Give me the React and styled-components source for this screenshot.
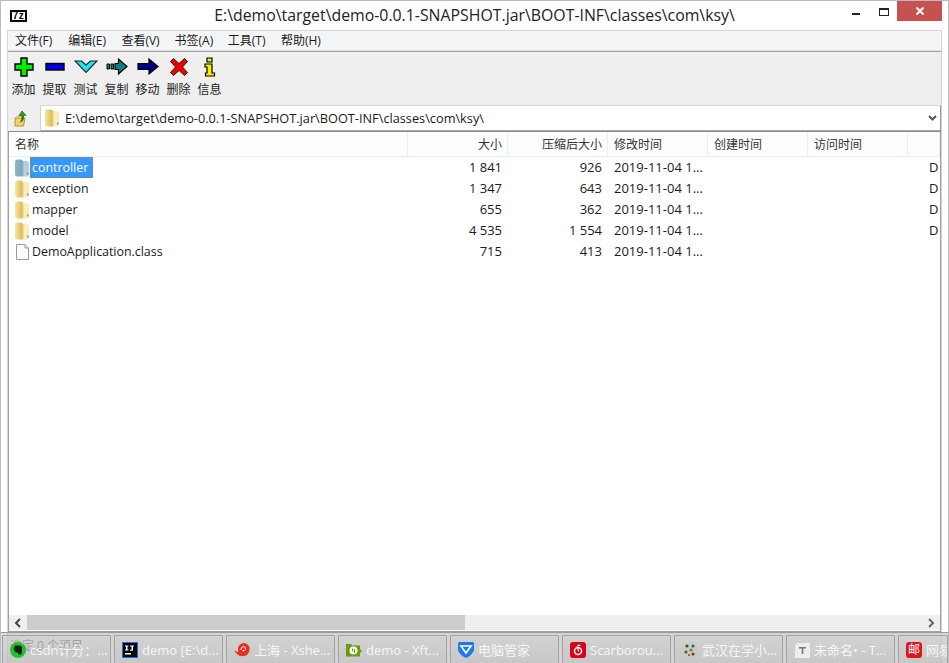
import React from 'react';
import styled, { createGlobalStyle } from 'styled-components';

const UI_FONT = '"Open Sans", "Noto Sans CJK SC", sans-serif';
const COLUMNS = '399px 100px 100px 100px 100px 100px 32px';

const GlobalStyle = createGlobalStyle`
    html, body { margin: 0; padding: 0; width: 949px; height: 663px; overflow: hidden; background: #fff; }
    * { box-sizing: border-box; }
    body { font-family: ${UI_FONT}; font-size: 13px; color: #1a1a1a; }
`;

const menus = ['文件(F)', '编辑(E)', '查看(V)', '书签(A)', '工具(T)', '帮助(H)'];

const files = [
    { name: 'controller', size: '1 841', packed: '926', kind: 'folder', selected: true, attr: 'D' },
    { name: 'exception', size: '1 347', packed: '643', kind: 'folder', attr: 'D' },
    { name: 'mapper', size: '655', packed: '362', kind: 'folder', attr: 'D' },
    { name: 'model', size: '4 535', packed: '1 554', kind: 'folder', attr: 'D' },
    { name: 'DemoApplication.class', size: '715', packed: '413', kind: 'file', attr: '' },
];

const PlusIcon = () => (
    <svg width="20" height="20" viewBox="0 0 20 20">
        <path d="M7 1h6v6h6v6h-6v6H7v-6H1V7h6z" fill="#00f000" stroke="#000" strokeWidth="1.4" />
    </svg>
);
const MinusIcon = () => (
    <svg width="20" height="20" viewBox="0 0 20 20">
        <rect x="1" y="6.5" width="18" height="6.5" fill="#0000e0" stroke="#000" strokeWidth="1.4" />
    </svg>
);
const CheckIcon = () => (
    <svg width="24" height="20" viewBox="0 0 24 20">
        <path d="M1 4h6.500l4.500 4 4.500-4H23L12 15.500z" fill="#19e6f0" stroke="#222" strokeWidth="1.200" />
    </svg>
);
const CopyIcon = () => (
    <svg width="22" height="20" viewBox="0 0 22 20">
        <path d="M1 7h2.500v5H1zM5 7h2.500v5H5z" fill="#0d8a8a" stroke="#000" strokeWidth="1" />
        <path d="M9 6.500h3.500V2l8.500 7.500-8.500 7.500v-4.500H9z" fill="#0d8080" stroke="#000" strokeWidth="1.200" />
    </svg>
);
const MoveIcon = () => (
    <svg width="22" height="20" viewBox="0 0 22 20">
        <path d="M1 6.500h11V2l9 7.500-9 7.500v-4.500H1z" fill="#000080" stroke="#000" strokeWidth="1.200" />
    </svg>
);
const DeleteIcon = () => (
    <svg width="20" height="20" viewBox="0 0 20 20">
        <path d="M4.500 1.500 10 6.500l5.500-5 3 3-5 5.500 5 5.500-3 3-5.500-5-5.500 5-3-3 5-5.500-5-5.500z" fill="#f00000" stroke="#222" strokeWidth="1" />
    </svg>
);
const InfoIcon = () => (
    <svg width="14" height="20" viewBox="0 0 14 20">
        <path d="M4 1h5v4H4zM2 7h7v9h2.500v3h-9v-3H4v-6H2z" fill="#f6f000" stroke="#000" strokeWidth="1.200" />
    </svg>
);

const tools = [
    { label: '添加', icon: <PlusIcon /> },
    { label: '提取', icon: <MinusIcon /> },
    { label: '测试', icon: <CheckIcon /> },
    { label: '复制', icon: <CopyIcon /> },
    { label: '移动', icon: <MoveIcon /> },
    { label: '删除', icon: <DeleteIcon /> },
    { label: '信息', icon: <InfoIcon /> },
];

const FolderIcon = ({ tint }) => {
    const id = tint ? 'folderBlue' : 'folderYellow';
    const stops = tint ? ['#8fb8ca', '#7da6ba', '#b4d0de'] : ['#f6e6a0', '#dcbc5c', '#f9eeb8'];
    return (
        <svg width="14" height="18" viewBox="0 0 14 18">
            <defs>
                <linearGradient id={id} x1="0" x2="1" y1="0" y2="0">
                    <stop offset="0" stopColor={stops[0]} />
                    <stop offset="0.5" stopColor={stops[1]} />
                    <stop offset="0.65" stopColor={stops[2]} />
                    <stop offset="1" stopColor={stops[2]} />
                </linearGradient>
            </defs>
            <path d="M0 3q0-2.500 2.500-2.500h3Q7.500.5 8 2h3.500Q14 2 14 4.500V15q0 2.500-2.500 2.500h-9Q0 17.500 0 15z" fill={`url(#${id})`} />
            <path d="M12 13.500h1.500v2H12z" fill="#3f9fe0" />
        </svg>
    );
};

const FileIcon = () => (
    <svg width="13" height="16" viewBox="0 0 13 16">
        <path d="M.5.500h8.500l3.500 3.500v11.500H.5z" fill="#fbfbfb" stroke="#9a9a9a" />
        <path d="M9 .500V4h3.500" fill="#e6e6e6" stroke="#9a9a9a" />
    </svg>
);

const UpIcon = () => (
    <svg width="16" height="17" viewBox="0 0 16 17">
        <path d="M1 8h10l-1.500 8H1z" fill="#f0d070" stroke="#b89030" />
        <path d="M2 6h6v2H2z" fill="#e8c060" />
        <path d="M8 1l4 4.500h-2.500V8q0 3-3 4 1.500-2 1.500-4V5.500H5z" fill="#2f9a2f" stroke="#176017" strokeWidth=".7" />
    </svg>
);

const EvernoteIcon = () => (
    <svg width="16" height="16" viewBox="0 0 16 16">
        <circle cx="8" cy="8" r="8" fill="#22c02f" />
        <path d="M5 3.500h5q2.500 .500 2 3.500L11.500 12.500H8.500L8 10.500H5.500L3.500 7z" fill="#142014" />
    </svg>
);
const IdeaIcon = () => (
    <svg width="16" height="16" viewBox="0 0 16 16">
        <rect x=".5" y=".5" width="15" height="15" fill="#000" stroke="#1670d8" />
        <rect x="3" y="11" width="6" height="1.500" fill="#fff" />
        <path d="M3 3.500h3.500v1h-1v3h1v1H3v-1h1v-3H3zM8 3.500h4v1h-1v3.500q0 .8-1 .8H8v-1h1.500V4.500H8z" fill="#fff" />
    </svg>
);
const XshellIcon = () => (
    <svg width="16" height="16" viewBox="0 0 16 16">
        <path d="M0 8.500q3 1.500 4.500 1-2-5 3-8 5-1.500 7.500 2.500 2 5-2 9-6 3-10-1z" fill="#e8301e" />
        <path d="M7 8q-.5-3 2.500-3.500 2.500.500 2 3-1 2-3 1" fill="none" stroke="#fff" strokeWidth="1" />
    </svg>
);
const XftpIcon = () => (
    <svg width="16" height="14" viewBox="0 0 16 14">
        <path d="M0 1h5l1 1.500h8V6l2 2-2 2v3.500H0z" fill="#6a9a10" />
        <circle cx="7.500" cy="7.500" r="4" fill="#fff" />
        <path d="M6.500 5.500v3M8.500 6v4" stroke="#6a9a10" strokeWidth="1" />
    </svg>
);
const ManagerIcon = () => (
    <svg width="16" height="16" viewBox="0 0 16 16">
        <path d="M1.500 0h13q1.500 0 1.500 1.500V8q-1.500 5-8 8-6.500-3-8-8V1.500Q0 0 1.500 0z" fill="#1a78f0" />
        <path d="M3 4h10L8 11z" fill="none" stroke="#fff" strokeWidth="1.700" />
    </svg>
);
const MusicIcon = () => (
    <svg width="16" height="16" viewBox="0 0 16 16">
        <rect width="16" height="16" rx="3" fill="#d9001b" />
        <circle cx="8" cy="9" r="3.500" fill="none" stroke="#fff" strokeWidth="1.500" />
        <path d="M10.500 3.500q-3-1-3 1l1 5" fill="none" stroke="#fff" strokeWidth="1.200" />
    </svg>
);
const AvatarIcon = () => (
    <svg width="16" height="16" viewBox="0 0 16 16">
        <circle cx="8" cy="8" r="8" fill="#cfcabb" />
        <circle cx="5" cy="4" r="1.500" fill="#444" />
        <circle cx="11" cy="4" r="1.500" fill="#2a5a9a" />
        <circle cx="4" cy="10" r="1.500" fill="#555" />
        <circle cx="9" cy="8" r="1.500" fill="#6a7a40" />
        <circle cx="11" cy="12" r="1.500" fill="#444" />
        <circle cx="7" cy="13" r="1" fill="#b03030" />
    </svg>
);
const TyporaIcon = () => (
    <svg width="16" height="16" viewBox="0 0 16 16">
        <path d="M3 1h13v15H1V3z" fill="#ececec" />
        <path d="M5 5h7v1.500H9.300V12H7.700V6.500H5z" fill="#777" />
    </svg>
);
const MailIcon = () => <MailBadge>邮</MailBadge>;

const tasks = [
    { label: 'csdn计分：...', icon: <EvernoteIcon /> },
    { label: 'demo [E:\\d...', icon: <IdeaIcon /> },
    { label: '上海 - Xshe...', icon: <XshellIcon /> },
    { label: 'demo - Xft...', icon: <XftpIcon /> },
    { label: '电脑管家', icon: <ManagerIcon /> },
    { label: 'Scarborou...', icon: <MusicIcon /> },
    { label: '武汉在学小...', icon: <AvatarIcon /> },
    { label: '未命名• - T...', icon: <TyporaIcon /> },
    { label: '网易', icon: <MailIcon />, clipped: true },
];

const App = () => {
    return (
        <>
            <GlobalStyle />
            <Window>
                <TitleBar>
                    <AppLogo>7z</AppLogo>
                    <Title>E:\demo\target\demo-0.0.1-SNAPSHOT.jar\BOOT-INF\classes\com\ksy\</Title>
                    <WindowButtons>
                        <MinimizeButton />
                        <MaximizeButton />
                        <CloseButton>
                            <svg width="10" height="10" viewBox="0 0 10 10">
                                <path d="M1.500 1.500l7 7M8.500 1.500l-7 7" stroke="#fff" strokeWidth="1.800" />
                            </svg>
                        </CloseButton>
                    </WindowButtons>
                </TitleBar>
                <Client>
                    <MenuBar>
                        {menus.map((m) => (
                            <MenuItem key={m}>{m}</MenuItem>
                        ))}
                    </MenuBar>
                    <Toolbar>
                        {tools.map((t) => (
                            <ToolButton key={t.label}>
                                <ToolIcon>{t.icon}</ToolIcon>
                                <span>{t.label}</span>
                            </ToolButton>
                        ))}
                    </Toolbar>
                    <AddressRow>
                        <UpButton>
                            <UpIcon />
                        </UpButton>
                        <AddressBox>
                            <FolderIcon />
                            <AddressText>E:\demo\target\demo-0.0.1-SNAPSHOT.jar\BOOT-INF\classes\com\ksy\</AddressText>
                            <svg width="9" height="7" viewBox="0 0 9 7">
                                <path d="M1 1l3.500 3.500L8 1" fill="none" stroke="#555" strokeWidth="2" />
                            </svg>
                        </AddressBox>
                    </AddressRow>
                    <ListPanel>
                        <HeaderRow>
                            <HeaderCell>名称</HeaderCell>
                            <HeaderCell $right>大小</HeaderCell>
                            <HeaderCell $right>压缩后大小</HeaderCell>
                            <HeaderCell>修改时间</HeaderCell>
                            <HeaderCell>创建时间</HeaderCell>
                            <HeaderCell>访问时间</HeaderCell>
                            <HeaderCell />
                        </HeaderRow>
                        <Rows>
                            {files.map((f) => (
                                <FileRow key={f.name}>
                                    <NameCell>
                                        <IconSlot>
                                            {f.kind === 'folder' ? <FolderIcon tint={f.selected} /> : <FileIcon />}
                                        </IconSlot>
                                        <FileName $selected={f.selected}>{f.name}</FileName>
                                    </NameCell>
                                    <Cell $right>{f.size}</Cell>
                                    <Cell $right>{f.packed}</Cell>
                                    <Cell>2019-11-04 1...</Cell>
                                    <Cell />
                                    <Cell />
                                    <AttrCell>{f.attr}</AttrCell>
                                </FileRow>
                            ))}
                        </Rows>
                        <HScroll>
                            <ScrollArrow>
                                <svg width="8" height="10" viewBox="0 0 8 10">
                                    <path d="M6 1L2 5l4 4" fill="none" stroke="#444" strokeWidth="2" />
                                </svg>
                            </ScrollArrow>
                            <ScrollThumb />
                            <ScrollArrow $end>
                                <svg width="8" height="10" viewBox="0 0 8 10">
                                    <path d="M2 1l4 4-4 4" fill="none" stroke="#666" strokeWidth="2" />
                                </svg>
                            </ScrollArrow>
                        </HScroll>
                    </ListPanel>
                    <StatusBar>选定 0 个项目</StatusBar>
                </Client>
                <Taskbar>
                    {tasks.map((t) => (
                        <TaskButton key={t.label} $clipped={t.clipped}>
                            <TaskIcon>{t.icon}</TaskIcon>
                            <TaskLabel>{t.label}</TaskLabel>
                        </TaskButton>
                    ))}
                </Taskbar>
            </Window>
        </>
    );
};

export default App;

const Window = styled.div`
    position: relative;
    display: flex;
    flex-direction: column;
    width: 949px;
    height: 663px;
    overflow: hidden;
    background: #fff;
    border: 1px solid #bcbcbc;
    border-bottom: none;
`;

const TitleBar = styled.div`
    display: flex;
    align-items: center;
    justify-content: center;
    position: relative;
    height: 29px;
    flex: none;
`;

const AppLogo = styled.div`
    position: absolute;
    left: 9px;
    top: 9px;
    width: 17px;
    height: 12px;
    border: 2px solid #000;
    background: #fff;
    color: #000;
    font: bold 10px/8px "Liberation Sans", sans-serif;
    text-align: center;
    letter-spacing: 0.5px;
`;

const Title = styled.div`
    font-size: 15.85px;
    color: #222;
    margin-bottom: 1px;
    white-space: nowrap;
`;

const WindowButtons = styled.div`
    position: absolute;
    right: 6px;
    top: 0;
    display: flex;
    align-items: flex-start;
`;

const MinimizeButton = styled.div`
    width: 8px;
    height: 2px;
    margin-top: 12px;
    margin-right: 19px;
    background: #222;
`;

const MaximizeButton = styled.div`
    width: 10px;
    height: 8px;
    margin-top: 7px;
    margin-right: 8px;
    border: 1px solid #222;
    border-top-width: 2px;
`;

const CloseButton = styled.div`
    display: flex;
    align-items: center;
    justify-content: center;
    width: 45px;
    height: 20px;
    background: #c75050;
`;

const Client = styled.div`
    display: flex;
    flex-direction: column;
    flex: 1;
    margin: 0 6px;
    min-height: 0;
    border: 1px solid #d4d4d4;
    border-bottom: none;
    background: #efefef;
`;

const MenuBar = styled.div`
    display: flex;
    height: 20px;
    flex: none;
    align-items: center;
    padding: 0 0 1px 7px;
    background: #f4f5f7;
    border-bottom: 1px solid #e2e2e2;
    font-size: 12px;
`;

const MenuItem = styled.div`
    width: 53.2px;
    white-space: nowrap;
`;

const Toolbar = styled.div`
    display: flex;
    height: 54px;
    flex: none;
    padding: 4px 0 0;
    border-top: 1px solid #a0a0a0;
    background: #efefef;
`;

const ToolButton = styled.div`
    display: flex;
    flex-direction: column;
    align-items: center;
    width: 31px;
    font-size: 12px;
    line-height: 16px;
    color: #222;
`;

const ToolIcon = styled.div`
    display: flex;
    align-items: center;
    justify-content: center;
    height: 22px;
    margin-bottom: 4px;
`;

const AddressRow = styled.div`
    display: flex;
    flex: none;
    height: 26px;
    background: #efefef;
`;

const UpButton = styled.div`
    display: flex;
    align-items: center;
    justify-content: center;
    width: 32px;
    padding-right: 5px;
`;

const AddressBox = styled.div`
    display: flex;
    flex: 1;
    align-items: center;
    padding: 0 3px 0 4px;
    gap: 6px;
    background: #fff;
    border: 1px solid #a8a8a8;
    border-right-color: #9a9a9a;
    border-top-color: #d8d8d8;
    border-left-color: #d0d0d0;
`;

const AddressText = styled.div`
    flex: 1;
    font-size: 12.75px;
    white-space: nowrap;
`;

const ListPanel = styled.div`
    display: flex;
    flex-direction: column;
    height: 501px;
    flex: none;
    background: #fff;
    border: 1px solid #a0a0a0;
    border-top-color: #8c8c8c;
    overflow: hidden;
`;

const HeaderRow = styled.div`
    display: grid;
    grid-template-columns: ${COLUMNS};
    height: 25px;
    flex: none;
    background: #fdfdfd;
    border-bottom: 1px solid #e5f0fb;
`;

const HeaderCell = styled.div`
    display: flex;
    align-items: center;
    justify-content: ${(p) => (p.$right ? 'flex-end' : 'flex-start')};
    padding: 0 5px 0 6px;
    font-size: 12px;
    color: #333;
    border-right: 1px solid #e5f0fb;
`;

const Rows = styled.div`
    flex: 1;
    min-height: 0;
`;

const FileRow = styled.div`
    display: grid;
    grid-template-columns: ${COLUMNS};
    height: 21px;
`;

const NameCell = styled.div`
    display: flex;
    align-items: center;
    padding-left: 6px;
`;

const IconSlot = styled.div`
    display: flex;
    justify-content: center;
    width: 14px;
    margin-right: 1px;
`;

const FileName = styled.div`
    height: 21px;
    line-height: 22px;
    padding: 0 5px 0 2px;
    font-size: 12.4px;
    color: ${(p) => (p.$selected ? '#fff' : '#1a1a1a')};
    background: ${(p) => (p.$selected ? '#3399ff' : 'transparent')};
    outline: ${(p) => (p.$selected ? '1px dotted #b87040' : 'none')};
    outline-offset: -1px;
`;

const Cell = styled.div`
    line-height: 21px;
    font-size: 13px;
    padding: 0 6px 0 6px;
    text-align: ${(p) => (p.$right ? 'right' : 'left')};
    white-space: nowrap;
`;

const AttrCell = styled.div`
    line-height: 21px;
    font-size: 13px;
    padding-left: 21px;
    white-space: nowrap;
`;

const HScroll = styled.div`
    display: flex;
    height: 15px;
    flex: none;
    margin-bottom: 1px;
    background: #efefef;
`;

const ScrollArrow = styled.div`
    display: flex;
    align-items: center;
    justify-content: center;
    width: 18px;
    margin-left: ${(p) => (p.$end ? 'auto' : '0')};
`;

const ScrollThumb = styled.div`
    width: 438px;
    background: #cdcdcd;
`;

const StatusBar = styled.div`
    padding: 4px 0 0 2px;
    font-size: 12px;
    color: #333;
    background: #efefef;
    flex: 1;
`;

const Taskbar = styled.div`
    position: absolute;
    left: 0;
    right: 0;
    bottom: 0;
    height: 31px;
    display: flex;
    gap: 3px;
    padding: 2px 0 0 1px;
    background: rgba(170, 170, 170, 0.4);
    border-top: 1px solid #9a9a9a;
`;

const TaskButton = styled.div`
    display: flex;
    flex: none;
    align-items: center;
    gap: 4px;
    width: ${(p) => (p.$clipped ? '50px' : '109px')};
    padding-left: 7px;
    overflow: hidden;
    background: linear-gradient(rgba(210, 210, 210, 0.6), rgba(192, 192, 192, 0.6));
    border: 1px solid #a4a4a4;
    border-bottom: none;
    border-radius: 1px 1px 0 0;
`;

const TaskIcon = styled.div`
    display: flex;
    flex: none;
    align-items: center;
    justify-content: center;
    width: 16px;
`;

const TaskLabel = styled.div`
    font-size: 13px;
    color: #f6f6f6;
    white-space: nowrap;
`;

const MailBadge = styled.div`
    width: 16px;
    height: 16px;
    border-radius: 3px;
    background: #e0141e;
    color: #fff;
    font-size: 12px;
    line-height: 16px;
    text-align: center;
`;
